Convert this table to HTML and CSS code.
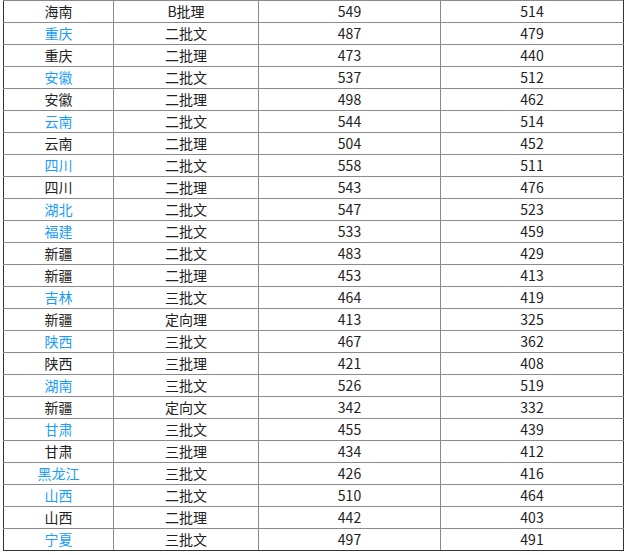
FILE: index.html
```html
<!DOCTYPE html>
<html lang="zh-CN">
<head>
<meta charset="utf-8">
<title>分数线</title>
<link rel="stylesheet" href="styles.css">
</head>
<body>
<table class="score-table">
<colgroup>
<col class="c1"><col class="c2"><col class="c3"><col class="c4">
</colgroup>
<tbody>
<tr><td>海南</td><td>B批理</td><td>549</td><td>514</td></tr>
<tr><td><a href="#">重庆</a></td><td>二批文</td><td>487</td><td>479</td></tr>
<tr><td>重庆</td><td>二批理</td><td>473</td><td>440</td></tr>
<tr><td><a href="#">安徽</a></td><td>二批文</td><td>537</td><td>512</td></tr>
<tr><td>安徽</td><td>二批理</td><td>498</td><td>462</td></tr>
<tr><td><a href="#">云南</a></td><td>二批文</td><td>544</td><td>514</td></tr>
<tr><td>云南</td><td>二批理</td><td>504</td><td>452</td></tr>
<tr><td><a href="#">四川</a></td><td>二批文</td><td>558</td><td>511</td></tr>
<tr><td>四川</td><td>二批理</td><td>543</td><td>476</td></tr>
<tr><td><a href="#">湖北</a></td><td>二批文</td><td>547</td><td>523</td></tr>
<tr><td><a href="#">福建</a></td><td>二批文</td><td>533</td><td>459</td></tr>
<tr><td>新疆</td><td>二批文</td><td>483</td><td>429</td></tr>
<tr><td>新疆</td><td>二批理</td><td>453</td><td>413</td></tr>
<tr><td><a href="#">吉林</a></td><td>三批文</td><td>464</td><td>419</td></tr>
<tr><td>新疆</td><td>定向理</td><td>413</td><td>325</td></tr>
<tr><td><a href="#">陕西</a></td><td>三批文</td><td>467</td><td>362</td></tr>
<tr><td>陕西</td><td>三批理</td><td>421</td><td>408</td></tr>
<tr><td><a href="#">湖南</a></td><td>三批文</td><td>526</td><td>519</td></tr>
<tr><td>新疆</td><td>定向文</td><td>342</td><td>332</td></tr>
<tr><td><a href="#">甘肃</a></td><td>三批文</td><td>455</td><td>439</td></tr>
<tr><td>甘肃</td><td>三批理</td><td>434</td><td>412</td></tr>
<tr><td><a href="#">黑龙江</a></td><td>三批文</td><td>426</td><td>416</td></tr>
<tr><td><a href="#">山西</a></td><td>二批文</td><td>510</td><td>464</td></tr>
<tr><td>山西</td><td>二批理</td><td>442</td><td>403</td></tr>
<tr><td><a href="#">宁夏</a></td><td>三批文</td><td>497</td><td>491</td></tr>
</tbody>
</table>
</body>
</html>
```

FILE: styles.css
```css
html, body {
  margin: 0;
  padding: 0;
  background: #ffffff;
}

.score-table {
  margin-left: 3px;
  width: 621px;
  table-layout: fixed;
  border-collapse: collapse;
  font-family: "Microsoft YaHei", "Noto Sans CJK SC", "Noto Sans", sans-serif;
  font-size: 14px;
  color: #222222;
}

.c1 { width: 110px; }
.c2 { width: 145px; }
.c3 { width: 182px; }
.c4 { width: 183px; }

.score-table td {
  height: 21px;
  padding: 0;
  border: 1px solid #8a8a8a;
  text-align: center;
  vertical-align: middle;
  line-height: 21px;
  white-space: nowrap;
}

.score-table td:first-child { border-left-color: #333333; }
.score-table td:last-child { border-right-color: #333333; }
.score-table tr:last-child td { border-bottom-color: #333333; }

.score-table a {
  color: #1a9dfa;
  text-decoration: none;
}
```
